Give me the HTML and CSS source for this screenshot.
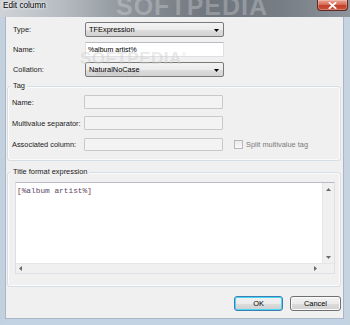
FILE: index.html
```html
<!DOCTYPE html>
<html>
<head>
<meta charset="utf-8">
<link rel="stylesheet" href="styles.css">
</head>
<body>
<div class="window">
  <div class="titlebar">
    <span class="title">Edit column</span>
    <div class="close"><svg width="9" height="7" viewBox="0 0 9 7"><path d="M1.5 0.8 L7.5 6.2 M7.5 0.8 L1.5 6.2" stroke="#fff" stroke-width="1.8" stroke-linecap="square"/></svg></div>
    <div class="wm-title">SOFTPEDIA</div>
  </div>
  <div class="frame">
    <div class="client">
      <div class="rows">
        <div class="lbl">Type:</div>
        <div class="combo"><span>TFExpression</span><svg class="arrow" width="5" height="3" viewBox="0 0 5 3"><path d="M0 0 H5 L2.5 3 Z" fill="#000"/></svg></div>
        <div class="lbl">Name:</div>
        <div class="edit">%album artist%</div>
        <div class="lbl">Collation:</div>
        <div class="combo"><span>NaturalNoCase</span><svg class="arrow" width="5" height="3" viewBox="0 0 5 3"><path d="M0 0 H5 L2.5 3 Z" fill="#000"/></svg></div>
      </div>

      <div class="group tag">
        <div class="legend">Tag</div>
        <div class="tag-grid">
          <div class="lbl">Name:</div>
          <div class="edit disabled"></div>
          <div></div>
          <div class="lbl">Multivalue separator:</div>
          <div class="edit disabled"></div>
          <div></div>
          <div class="lbl">Associated column:</div>
          <div class="edit disabled"></div>
          <div class="check"><span class="box"></span><span class="check-text">Split multivalue tag</span></div>
        </div>
      </div>

      <div class="group tfe">
        <div class="legend">Title format expression</div>
        <div class="textarea">
          <div class="ta-main">
            <div class="ta-text"><span class="br">[</span><span class="fld">%album artist%</span><span class="br">]</span></div>
            <div class="vscroll">
              <svg width="5" height="3" viewBox="0 0 5 3"><path d="M0 3 H5 L2.5 0 Z" fill="#6a6a6a"/></svg>
              <svg width="5" height="3" viewBox="0 0 5 3"><path d="M0 0 H5 L2.5 3 Z" fill="#6a6a6a"/></svg>
            </div>
          </div>
          <div class="hscroll">
            <div class="hbar">
              <svg width="3" height="5" viewBox="0 0 3 5"><path d="M3 0 V5 L0 2.5 Z" fill="#6a6a6a"/></svg>
              <svg width="3" height="5" viewBox="0 0 3 5"><path d="M0 0 V5 L3 2.5 Z" fill="#6a6a6a"/></svg>
            </div>
            <div class="corner"></div>
          </div>
        </div>
      </div>

      <div class="buttons">
        <div class="btn default">OK</div>
        <div class="btn cancel">Cancel</div>
      </div>
    </div>
  </div>
  <div class="wm-body">SOFTPEDIA<sup>®</sup></div>
  <div class="wm-url">www.softpedia.com</div>
</div>
</body>
</html>
```

FILE: styles.css
```css
* { box-sizing: border-box; }
html, body { margin: 0; padding: 0; }
body {
  width: 350px;
  height: 325px;
  overflow: hidden;
  font-family: "Liberation Sans", Arial, sans-serif;
  font-size: 7.4px;
  color: #1a1a1a;
}
.window {
  position: relative;
  width: 350px;
  height: 325px;
  display: flex;
  flex-direction: column;
  background: #c4d2e0;
}
.titlebar {
  position: relative;
  height: 17px;
  display: flex;
  align-items: flex-start;
  padding: 0 2px 0 3px;
  background: linear-gradient(90deg, #cfd3d7 0%, #b5bbc1 18%, #8a9198 38%, #6e757c 60%, #767d85 80%, #8d949b 100%);
  overflow: hidden;
}
.title {
  position: relative;
  z-index: 2;
  font-size: 8.2px;
  line-height: 12px;
  color: #000;
  text-shadow: 0 0 3px #fff, 0 0 5px #fff;
}
.close {
  position: relative;
  z-index: 2;
  margin-left: auto;
  width: 31px;
  height: 11px;
  border: 1px solid #5e2a22;
  border-top: none;
  border-radius: 0 0 4px 4px;
  background: linear-gradient(#e9a594 0%, #d86c56 45%, #c3412b 55%, #c9523a 100%);
  display: flex;
  align-items: center;
  justify-content: center;
  box-shadow: inset 0 0 0 1px rgba(255,255,255,0.25);
}
.wm-title {
  position: absolute;
  left: 116px;
  top: -8px;
  font-size: 25px;
  font-weight: bold;
  letter-spacing: 1px;
  color: rgba(235,238,240,0.28);
  z-index: 1;
}
.frame {
  flex: 1;
  border-left: 6px solid #c3d1df;
  border-right: 7px solid #c6d3e0;
  border-bottom: 7px solid #c3d3e3;
  display: flex;
}
.client {
  flex: 1;
  background: #f0f0f0;
  box-shadow: 0 0 0 1px #a8b7c7;
  display: flex;
  flex-direction: column;
}
.lbl {
  display: flex;
  align-items: center;
  white-space: nowrap;
}
.rows {
  display: grid;
  grid-template-columns: 72px 139px;
  grid-auto-rows: 15px;
  row-gap: 5px;
  padding: 5px 0 0 7px;
}
.combo {
  display: flex;
  align-items: center;
  justify-content: space-between;
  padding: 0 4px 0 3px;
  border: 1px solid #7a7a7a;
  border-radius: 2px;
  background: linear-gradient(#f3f3f3 0%, #ebebeb 50%, #dedede 51%, #d2d2d2 100%);
  color: #000;
}
.combo .arrow { margin-top: 1px; }
.edit {
  display: flex;
  align-items: center;
  padding: 0 2px;
  border: 1px solid #dde0e5;
  border-top-color: #b8bcc2;
  background: #fff;
  color: #000;
  font-size: 7px;
}
.edit.disabled {
  background: #f3f3f3;
  border: 1px solid #c9c9c9;
  border-radius: 1px;
}
.group {
  margin: 0 2px 0 1px;
  border: 1px solid #d6dee4;
  border-radius: 3px;
  box-shadow: inset 0 0 0 1px #fbfbfb;
}
.legend {
  width: fit-content;
  margin: -6px 0 0 3px;
  padding: 0 2px;
  line-height: 10px;
  background: #f0f0f0;
}
.tag { margin-top: 9px; }
.tag-grid {
  display: grid;
  grid-template-columns: 72px 139px auto;
  grid-template-rows: 14px 14px 14px;
  row-gap: 7px;
  margin-top: 4px;
  padding: 0 0 9px 4px;
}
.tag-grid > :nth-child(n+7) { margin-top: 1px; }
.check {
  display: flex;
  align-items: center;
  padding-left: 11px;
  color: #7a7a7a;
}
.box {
  width: 9px;
  height: 9px;
  border: 1px solid #b8b8b8;
  background: linear-gradient(#ececec, #f8f8f8);
  margin-right: 3px;
}
.tfe {
  margin-top: 11px;
  padding: 0 5px 12px 7px;
}
.tfe .legend { margin-left: -4px; }
.textarea {
  margin-top: 5px;
  height: 92px;
  border: 1px solid #dcdfe3;
  border-top-color: #b9bdc3;
  background: #fff;
  display: flex;
  flex-direction: column;
}
.ta-main {
  flex: 1;
  display: flex;
}
.ta-text {
  flex: 1;
  padding: 4px 1px;
  font-family: "Liberation Mono", "Courier New", monospace;
  font-size: 7.8px;
  line-height: 9px;
}
.br { color: #8a3030; }
.fld { color: #5a4868; }
.vscroll {
  width: 12px;
  background: #f0f0f0;
  border-left: 1px solid #e6e6e6;
  display: flex;
  flex-direction: column;
  justify-content: space-between;
  align-items: center;
  padding: 5px 0 4px;
}
.hscroll {
  height: 10px;
  display: flex;
  background: #f0f0f0;
  border-top: 1px solid #e6e6e6;
}
.hbar {
  flex: 1;
  display: flex;
  justify-content: space-between;
  align-items: center;
  padding: 0 5px 0 3px;
}
.corner {
  width: 12px;
  background: #f0f0f0;
}
.buttons {
  display: flex;
  justify-content: flex-end;
  gap: 7px;
  margin-top: 9px;
  padding-right: 2px;
}
.btn {
  height: 15px;
  display: flex;
  align-items: center;
  justify-content: center;
  border: 1px solid #707070;
  border-radius: 3px;
  background: linear-gradient(#f2f2f2 0%, #ebebeb 50%, #dddddd 51%, #cfcfcf 100%);
  color: #000;
  box-shadow: inset 0 0 0 1px #fbfbfb;
}
.btn.default {
  width: 49px;
  border-color: #3c7fb1;
  box-shadow: inset 0 0 0 1px #48d6f6;
}
.btn.cancel { width: 51px; }
.wm-body {
  position: absolute;
  left: 80px;
  top: 49px;
  font-size: 17px;
  font-weight: bold;
  letter-spacing: 0.5px;
  color: rgba(205,205,205,0.45);
  pointer-events: none;
}
.wm-body sup { font-size: 6px; }
.wm-url {
  position: absolute;
  left: 96px;
  top: 70px;
  font-size: 5px;
  color: rgba(170,170,170,0.5);
}
```
